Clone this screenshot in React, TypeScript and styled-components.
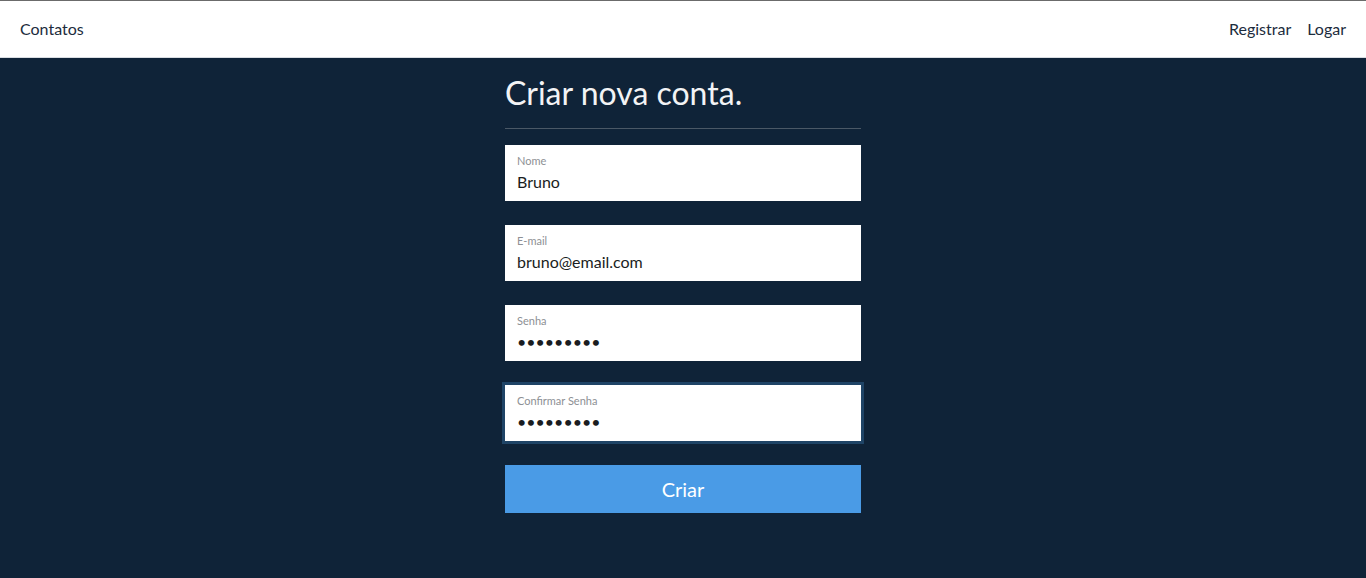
import { createGlobalStyle } from "styled-components"
import styled from "styled-components"

const GlobalStyle = createGlobalStyle`
  html, body {
    margin: 0;
    padding: 0;
    background: #0f2338;
    font-family: Lato, "Noto Sans", sans-serif;
  }
  * { box-sizing: border-box; }
`

interface FieldProps {
  label: string
  value: string
  type?: string
  focused?: boolean
}

function Field(props: FieldProps) {
  const { label, value, type = "text", focused } = props
  return (
    <FieldBox $focused={focused}>
      <FieldLabel>{label}</FieldLabel>
      <FieldInput type={type} defaultValue={value} autoFocus={focused} />
    </FieldBox>
  )
}

function App() {
  return (
    <>
      <GlobalStyle />
      <Navbar>
        <Brand>Contatos</Brand>
        <NavLinks>
          <NavLink>Registrar</NavLink>
          <NavLink>Logar</NavLink>
        </NavLinks>
      </Navbar>
      <Main>
        <FormStyled onSubmit={(e) => e.preventDefault()}>
          <Title>Criar nova conta.</Title>
          <Divider />
          <Fields>
            <Field label="Nome" value="Bruno" />
            <Field label="E-mail" value="bruno@email.com" />
            <Field label="Senha" value="123456789" type="password" />
            <Field label="Confirmar Senha" value="123456789" type="password" focused />
          </Fields>
          <SubmitButton type="submit">Criar</SubmitButton>
        </FormStyled>
      </Main>
    </>
  )
}

const Navbar = styled.nav`
  display: flex;
  align-items: center;
  justify-content: space-between;
  height: 58px;
  padding: 0 20px 2px;
  background: #fff;
  border-top: 1px solid #6b6b6b;
  border-bottom: 1px solid #d9dde2;
`

const Brand = styled.a`
  font-size: 16px;
  color: #1c2c3d;
`

const NavLinks = styled.div`
  display: flex;
  gap: 16px;
`

const NavLink = styled.a`
  font-size: 16px;
  color: #1c2c3d;
`

const Main = styled.main`
  display: flex;
  justify-content: center;
  min-height: 520px;
`

const FormStyled = styled.form`
  width: 356px;
  display: flex;
  flex-direction: column;
`

const Title = styled.h2`
  margin: 15px 0 0;
  font-size: 32px;
  font-weight: 400;
  color: #f2f3f5;
  line-height: 40px;
`

const Divider = styled.hr`
  margin: 15px 0 16px;
  border: none;
  border-top: 1px solid #4a5866;
`

const Fields = styled.div`
  display: flex;
  flex-direction: column;
  gap: 24px;
`

const FieldBox = styled.label<{ $focused?: boolean }>`
  display: flex;
  flex-direction: column;
  height: 56px;
  padding: 10px 12px 0;
  background: #fff;
  outline: ${(p) => (p.$focused ? "3px solid #1f4466" : "none")};
`

const FieldLabel = styled.span`
  font-size: 11px;
  color: #8d9094;
  line-height: 12px;
`

const FieldInput = styled.input`
  margin-top: 5px;
  padding: 0;
  border: none;
  outline: none;
  background: transparent;
  font-family: Lato, "Noto Sans", sans-serif;
  font-size: 16px;
  color: #1a1d21;
  line-height: 20px;
  caret-color: #111;
`

const SubmitButton = styled.button`
  margin-top: 24px;
  height: 48px;
  border: none;
  background: #4a9be6;
  color: #fff;
  font-family: Lato, "Noto Sans", sans-serif;
  font-size: 20px;
`

export default App
